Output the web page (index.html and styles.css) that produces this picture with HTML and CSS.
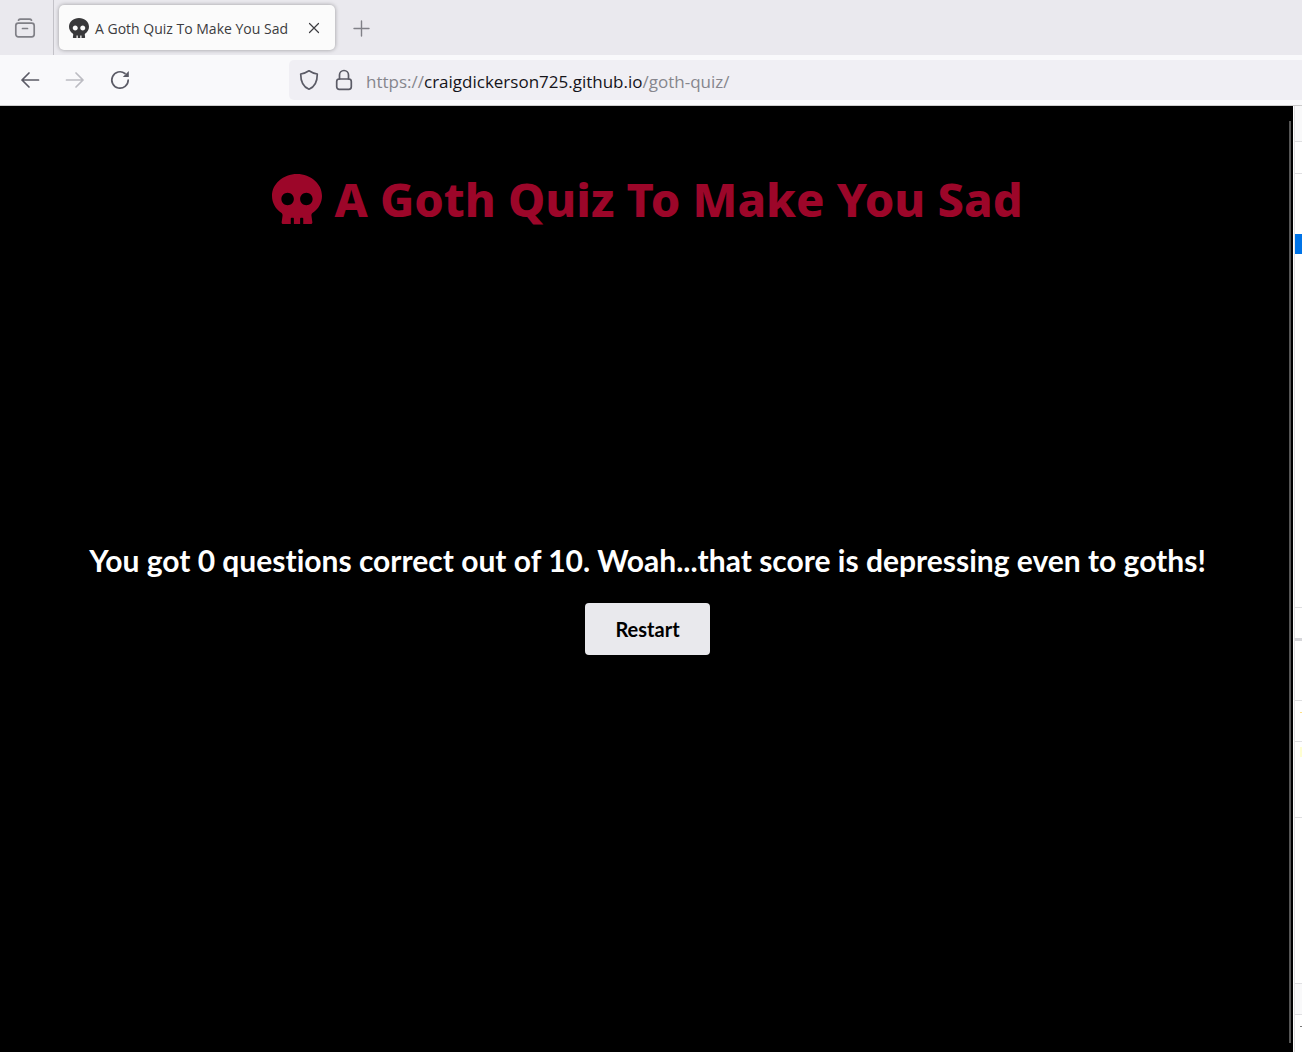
FILE: index.html
```html
<!DOCTYPE html>
<html lang="en">
<head>
<meta charset="utf-8">
<title>A Goth Quiz To Make You Sad</title>
<link rel="stylesheet" href="styles.css">
</head>
<body>
<svg class="defs" aria-hidden="true">
  <symbol id="skull" viewBox="0 0 512 512">
    <path d="M256 0C114.600 0 0 100.300 0 224c0 70.100 36.900 132.600 94.500 173.700 9.600 6.900 15.200 18.100 13.500 29.900l-9.400 66.200c-1.400 9.600 6 18.200 15.700 18.200H192v-56c0-4.400 3.600-8 8-8h16c4.400 0 8 3.600 8 8v56h64v-56c0-4.400 3.600-8 8-8h16c4.400 0 8 3.600 8 8v56h77.700c9.700 0 17.100-8.600 15.700-18.200l-9.400-66.200c-1.700-11.700 3.800-23 13.500-29.900C475.100 356.600 512 294.100 512 224 512 100.300 397.400 0 256 0zm-96 320c-35.300 0-64-28.700-64-64s28.700-64 64-64 64 28.700 64 64-28.700 64-64 64zm192 0c-35.300 0-64-28.700-64-64s28.700-64 64-64 64 28.700 64 64-28.700 64-64 64z"/>
  </symbol>
</svg>
<header class="browser">
  <div class="tabs">
    <button class="view" aria-label="Recent browsing">
      <svg class="icon" viewBox="0 0 20 20"><path d="M3.500 2.200C4 1.400 4.500 1.200 5.500 1.200h9c1 0 1.500.2 2 1"/><rect x=".8" y="5.200" width="18.400" height="13.600" rx="2.500"/><path d="M7.500 10.500h5"/></svg>
    </button>
    <div class="tab">
      <svg class="favicon"><use href="#skull"/></svg>
      <span class="tab-title">A Goth Quiz To Make You Sad</span>
      <button class="close" aria-label="Close tab"><svg class="small" viewBox="0 0 10 10"><path d="M.5.5l9 9M9.500.5l-9 9"/></svg></button>
    </div>
    <button class="new-tab" aria-label="New tab"><svg class="plus" viewBox="0 0 16 16"><path d="M7.500 1v15M0 8.500h15"/></svg></button>
  </div>
  <nav class="toolbar">
    <div class="nav-buttons">
      <button aria-label="Back"><svg class="icon" viewBox="0 0 20 20"><path d="M18.500 10H2M9 3l-7 7 7 7"/></svg></button>
      <button class="faded" aria-label="Forward" disabled><svg class="icon" viewBox="0 0 20 20"><path d="M1.500 10H18M11 3l7 7-7 7"/></svg></button>
      <button aria-label="Reload"><svg class="icon" viewBox="0 0 20 20"><path d="M18.200 10A8.200 8.200 0 1 1 15 3.500"/><path class="solid" d="M18.800 1v6h-6z"/></svg></button>
    </div>
    <div class="address">
      <svg class="icon" viewBox="0 0 20 20"><path d="M10 .8Q14 3.500 18.300 4C18.300 12 16 17 10 19.200 4 17 1.700 12 1.700 4Q6 3.500 10 .8z"/></svg>
      <svg class="icon" viewBox="0 0 20 20"><rect x="2.700" y="9" width="14.600" height="10.300" rx="2.500"/><path d="M5.500 9V5a4.500 4.500 0 0 1 9 0v4"/></svg>
      <a class="url" href="https://craigdickerson725.github.io/goth-quiz/">https://<span class="host">craigdickerson725.github.io</span>/goth-quiz/</a>
    </div>
  </nav>
</header>
<div class="window">
  <main class="page">
    <h1 class="title"><svg class="skull"><use href="#skull"/></svg>A Goth Quiz To Make You Sad</h1>
    <section class="result">
      <p class="score">You got 0 questions correct out of 10. Woah...that score is depressing even to goths!</p>
      <button class="restart">Restart</button>
    </section>
    <div class="scrollbar"></div>
  </main>
  <aside class="inspector" aria-label="Inspector">
    <div class="row tint"></div>
    <div class="row"></div>
    <div class="row tree"><div class="selected"></div></div>
    <div class="row open"></div>
    <div class="row band"></div>
    <div class="row rule"><i class="mark"></i></div>
    <div class="row rule near"><i class="mark pale"></i></div>
    <div class="row"></div>
    <div class="row tint"></div>
    <div class="row rule"><i class="mark dash"></i></div>
  </aside>
</div>
</body>
</html>
```
FILE: styles.css
```css
* { box-sizing: border-box; }
body {
  margin: 0;
  min-height: 100vh;
  display: flex;
  flex-direction: column;
  font-family: "Open Sans", "Noto Sans", sans-serif;
}
button { border: 0; padding: 0; background: none; color: inherit; font: inherit; display: flex; }
svg { flex: none; }
.defs { position: absolute; width: 0; height: 0; }
.icon, .small, .plus { fill: none; stroke: currentColor; stroke-width: 1.7; stroke-linecap: round; stroke-linejoin: round; overflow: visible; }
.icon { width: 20px; height: 20px; }
.small { width: 10px; height: 10px; stroke-width: 1.2; }
.plus { width: 16px; height: 16px; stroke-width: 1.4; }
.solid { fill: currentColor; stroke-width: 0; }

.tabs { height: 55px; display: flex; align-items: center; background: #eae9ee; color: #808087; }
.view { align-self: stretch; width: 54px; padding-left: 15px; align-items: center; border-right: 1px solid #c3c2c8; }
.tab {
  width: 276px; height: 45px; margin-left: 5px; padding: 0 16px 0 10px;
  display: flex; align-items: center;
  background: #fbfbfb; color: #3c3c40; border-radius: 5px;
  box-shadow: 0 0 4px rgba(0, 0, 0, .35);
}
.favicon { width: 20px; height: 20px; margin-right: 6px; fill: #38383a; }
.tab-title { flex: 1; padding-top: 2px; font-size: 14px; white-space: nowrap; }
.new-tab { margin-left: 19px; }

.toolbar { height: 51px; display: flex; align-items: center; background: #f9f9fb; color: #5b5b66; border-bottom: 1px solid #ccc; }
.nav-buttons { width: 289px; padding-left: 20px; display: flex; gap: 25px; }
.faded { color: #bcbcc2; }
.address { flex: 1; height: 40px; padding-left: 10px; display: flex; align-items: center; gap: 15px; background: #f0eff4; border-radius: 5px 0 0 5px; }
.url { margin-left: -3px; padding-top: 2px; color: #86868d; font-size: 17px; text-decoration: none; white-space: nowrap; }
.host { color: #15141a; }

.window { flex: 1; display: flex; }
.page {
  position: relative; flex: 1; padding: 58px 0 0 2px;
  display: flex; flex-direction: column; align-items: center;
  background: #000; color: #fff; font-family: Lato, "Noto Sans", sans-serif;
}
.title { margin: 0; display: flex; align-items: center; color: #9c0629; font-family: "Noto Sans", sans-serif; font-size: 47px; line-height: 70px; font-weight: 800; white-space: nowrap; }
.skull { width: 50px; height: 50px; margin-right: 12px; fill: currentColor; }
.result { flex: 1; padding-bottom: 92px; display: flex; flex-direction: column; align-items: center; justify-content: center; }
.score { margin: 0 0 23px; font-size: 30px; line-height: 40px; font-weight: 700; font-variant-ligatures: none; white-space: nowrap; }
.restart { width: 125px; height: 52px; align-items: center; justify-content: center; background: #e9e9ed; color: #000; border-radius: 4px; font-size: 20px; font-weight: 700; }
.scrollbar { position: absolute; top: 15px; right: 2px; bottom: 9px; width: 2px; background: #555; }

.inspector {
  width: 9px; border-left: 1px solid #fff; background: #fff;
  display: grid; grid-template-rows: 36px 32px 434px 30px 63px 41px 76px 166px 31px 1fr;
}
.row { border-left: 1px solid #e0e0e2; border-bottom: 1px solid #e0e0e2; }
.row:last-child, .open { border-bottom: 0; }
.tint { background: #f9f9fa; }
.tree { padding-top: 60px; }
.selected { height: 20px; background: #0074e8; }
.band { border-top: 3px solid #d7d7db; }
.rule { display: flex; justify-content: flex-end; align-items: flex-start; padding-top: 11px; }
.near { padding-top: 5px; }
.mark { width: 2px; height: 1px; background: #ffe28a; }
.pale { height: 10px; background: #ffffd2; }
.dash { background: #777; }
```
